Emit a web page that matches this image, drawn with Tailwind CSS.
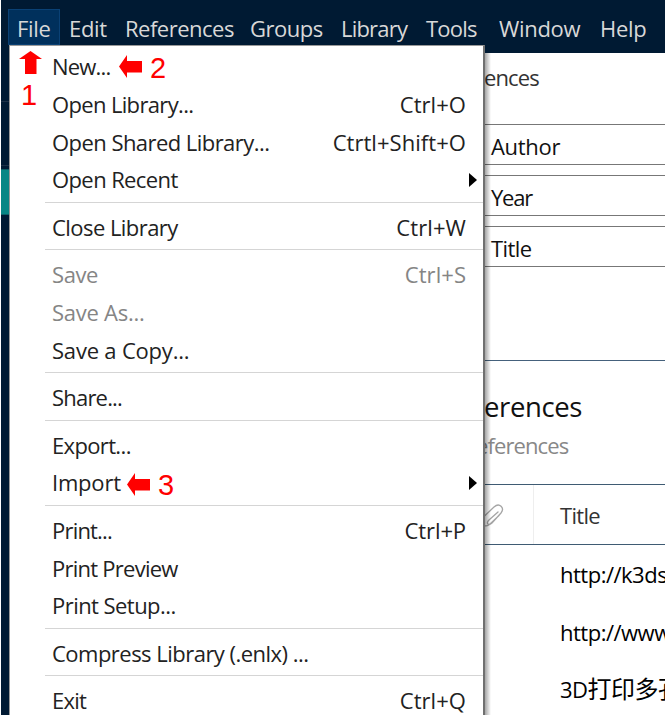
<!DOCTYPE html>
<html lang="en">
<head>
<meta charset="utf-8">
<title>Library</title>
<script src="https://cdn.jsdelivr.net/npm/@tailwindcss/browser@4"></script>
</head>
<body class="bg-white overflow-hidden">
<div class="relative w-[666px] h-[717px] overflow-hidden bg-white font-['Open_Sans','Noto_Sans_CJK_SC',sans-serif] text-[22px] tracking-[-0.3px] text-[#222] whitespace-nowrap">
  <div class="flex flex-col ml-px w-[664px] h-[715px] overflow-hidden">
    <nav class="flex h-[53px] shrink-0 bg-[#001a33] text-[#d8d8d8] pt-[9px] pl-[7px] leading-[38px]">
      <div class="w-[52px] h-[36px] bg-[#00305c] border border-[#0a4175] pl-[8px] leading-[36px]">File</div>
      <div class="w-[56px] pl-[9px]">Edit</div>
      <div class="w-[125px] pl-[9px] tracking-[-0.5px]">References</div>
      <div class="w-[91px] pl-[9px] tracking-[-0.5px]">Groups</div>
      <div class="w-[86px] pl-[9px] tracking-[-0.8px]">Library</div>
      <div class="w-[72px] pl-[8px] tracking-[-0.8px]">Tools</div>
      <div class="w-[102px] pl-[9px]">Window</div>
      <div class="pl-[8px]">Help</div>
    </nav>
    <div class="flex flex-1 min-h-0">
      <aside class="w-[8px] shrink-0 bg-[#001a33] pt-[48px]">
        <div class="h-px bg-[#1c3047]"></div>
        <div class="h-[63px]"></div>
        <div class="h-px bg-[#1c3047]"></div>
        <div class="h-[3px]"></div>
        <div class="h-[46px] bg-[#078685] border-y border-[#0a5f66]"></div>
      </aside>
      <main class="flex-1 min-w-0 pl-[475px] text-black">
        <div class="h-[71px] pt-[5px] leading-[38px] text-[#333] tracking-[-0.9px]">ences</div>
        <div class="flex flex-col gap-[10px] text-[#111]">
          <div class="h-[41px] border border-[#777] border-r-0 pl-[6px] leading-[42px]">Author</div>
          <div class="h-[41px] border border-[#777] border-r-0 pl-[6px] leading-[42px] tracking-[-1.2px]">Year</div>
          <div class="h-[41px] border border-[#777] border-r-0 pl-[6px] leading-[42px] tracking-[-0.6px]">Title</div>
        </div>
        <div class="h-[92px]"></div>
        <div class="h-px mt-px bg-[#45617c]"></div>
        <div class="h-[66px] pt-[26px] text-[27.5px] leading-[40px] text-[#111] tracking-[-0.4px]">erences</div>
        <div class="h-[57px] leading-[36px] text-[#888] -ml-[8px] tracking-[-0.9px]">eferences</div>
        <div class="flex h-[61px] border-y border-[#3f5b73] text-[#333]">
          <div class="w-[50px] border-r border-[#eee] pt-[16px]">
            <svg class="-ml-[3px]" width="26" height="30" viewBox="0 0 26 30" fill="none" stroke="#a5a5a5" stroke-width="1.3" stroke-linecap="round"><path d="M17 11 L8 19 C4.500 22.500 7.500 25 11 22 L20 12 C24 7 18.500 1 13 6 L3 15.500 C-2 20.500 2 28 8.500 23.500 L18 14.500"/></svg>
          </div>
          <div class="pl-[26px] leading-[60px] tracking-[-0.7px]">Title</div>
        </div>
        <div class="pl-[76px] text-black tracking-[-0.5px]">
          <div class="h-[58px] leading-[58px]">http://k3ds</div>
          <div class="h-[58px] leading-[58px]">http://www</div>
          <div class="h-[57px] leading-[55px]">3D<span class="text-[24px]">打印多孔</span></div>
        </div>
      </main>
    </div>
  </div>

  <div class="absolute left-[9px] top-[45px] w-[476px] h-[670px] bg-white border border-b-0 border-[#999] border-r-2 border-r-[#707070] pt-[2.4px] pl-[35px] leading-[37.6px] text-[#222] overflow-hidden">
    <div class="h-[37.6px] pl-[7px] tracking-[-0.8px]">New...</div>
    <div class="h-[37.6px] pl-[7px] pr-[17px] flex justify-between"><span class="tracking-[-0.65px]">Open Library...</span><span class="tracking-[0.05px]">Ctrl+O</span></div>
    <div class="h-[37.6px] pl-[7px] pr-[17px] flex justify-between"><span class="tracking-[-0.55px]">Open Shared Library...</span><span class="tracking-[0.05px]">Ctrtl+Shift+O</span></div>
    <div class="h-[37.6px] pl-[7px] pr-[6px] flex justify-between items-center"><span class="tracking-[-0.6px]">Open Recent</span><svg width="9" height="16" viewBox="0 0 9 16"><path d="M1 1 L9 8 L1 15Z" fill="#000"/></svg></div>
    <div class="h-[10px] pt-[3px]"><div class="h-px bg-[#d5d5d5]"></div></div>
    <div class="h-[37.6px] pl-[7px] pr-[17px] flex justify-between"><span class="tracking-[-0.55px]">Close Library</span><span class="tracking-[0.1px]">Ctrl+W</span></div>
    <div class="h-[10px] pt-[3px]"><div class="h-px bg-[#d5d5d5]"></div></div>
    <div class="h-[37.6px] pl-[7px] pr-[17px] flex justify-between text-[#858585]"><span class="tracking-[-0.4px]">Save</span><span class="tracking-[0.05px]">Ctrl+S</span></div>
    <div class="h-[37.6px] pl-[7px] text-[#858585] tracking-[-0.25px]">Save As...</div>
    <div class="h-[37.6px] pl-[7px] tracking-[-0.2px]">Save a Copy...</div>
    <div class="h-[10px] pt-[3px]"><div class="h-px bg-[#d5d5d5]"></div></div>
    <div class="h-[37.6px] pl-[7px] tracking-[-0.8px]">Share...</div>
    <div class="h-[10px] pt-[3px]"><div class="h-px bg-[#d5d5d5]"></div></div>
    <div class="h-[37.6px] pl-[7px] tracking-[-0.65px]">Export...</div>
    <div class="h-[37.6px] pl-[7px] pr-[6px] flex justify-between items-center"><span class="tracking-[-0.2px]">Import</span><svg width="9" height="16" viewBox="0 0 9 16"><path d="M1 1 L9 8 L1 15Z" fill="#000"/></svg></div>
    <div class="h-[10px] pt-[3px]"><div class="h-px bg-[#d5d5d5]"></div></div>
    <div class="h-[37.6px] pl-[7px] pr-[17px] flex justify-between"><span class="tracking-[-0.8px]">Print...</span><span class="tracking-[-0.1px]">Ctrl+P</span></div>
    <div class="h-[37.6px] pl-[7px] tracking-[-0.75px]">Print Preview</div>
    <div class="h-[37.6px] pl-[7px] tracking-[-0.55px]">Print Setup...</div>
    <div class="h-[10px] pt-[3px]"><div class="h-px bg-[#d5d5d5]"></div></div>
    <div class="h-[37.6px] pl-[7px] tracking-[-0.52px]">Compress Library (.enlx) ...</div>
    <div class="h-[10px] pt-[3px]"><div class="h-px bg-[#d5d5d5]"></div></div>
    <div class="h-[37.6px] pl-[7px] pr-[17px] flex justify-between"><span class="tracking-[-0.8px]">Exit</span><span class="tracking-[0.05px]">Ctrl+Q</span></div>
  </div>
  <div class="absolute left-[485px] top-[53px] w-[6px] h-[662px] bg-linear-to-r from-black/35 to-transparent"></div>

  <div class="absolute left-[19px] top-[51px] text-[#f00] font-['Liberation_Sans',sans-serif] text-[29px] leading-[30px] tracking-normal">
    <svg width="23" height="23" viewBox="0 0 23 23"><path d="M11.500 0 L23 8 H17.500 V23 H6 V8 H0Z" fill="#f00"/></svg>
    <div class="pl-[2px] pt-[6px]">1</div>
  </div>
  <div class="absolute left-[119px] top-[53px] flex items-center gap-[8px] text-[#f00] font-['Liberation_Sans',sans-serif] text-[29px] leading-[30px] tracking-normal">
    <svg class="-mt-[3px]" width="23" height="23" viewBox="0 0 23 23"><path d="M0 11.500 L8 0 V6 H23 V17.500 H8 V23Z" fill="#f00"/></svg><span>2</span>
  </div>
  <div class="absolute left-[127px] top-[470px] flex items-center gap-[8px] text-[#f00] font-['Liberation_Sans',sans-serif] text-[29px] leading-[30px] tracking-normal">
    <svg class="-mt-[1px]" width="23" height="23" viewBox="0 0 23 23"><path d="M0 11.500 L8 0 V6 H23 V17.500 H8 V23Z" fill="#f00"/></svg><span>3</span>
  </div>
</div>
</body>
</html>
